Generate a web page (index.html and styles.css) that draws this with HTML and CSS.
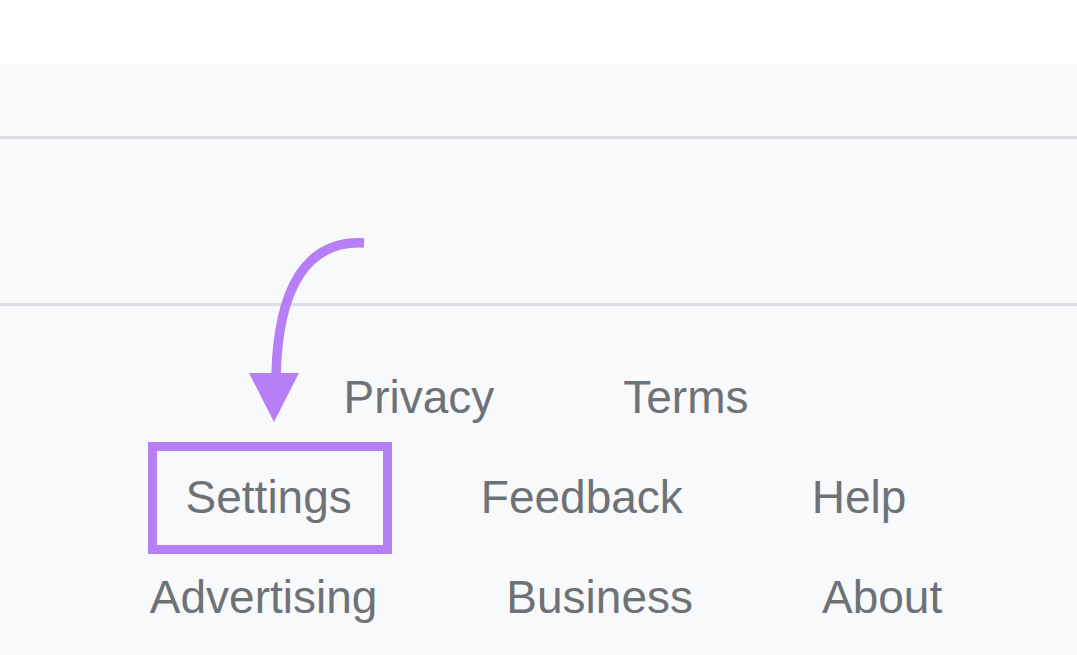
FILE: index.html
```html
<!DOCTYPE html>
<html lang="en">
<head>
<meta charset="utf-8">
<title>Footer settings</title>
<link rel="stylesheet" href="styles.css">
</head>
<body>
<div class="topbar"></div>
<main class="footer">
  <div class="band band-one"></div>
  <div class="band band-two"></div>
  <nav class="links">
    <div class="row">
      <a class="link" href="#">Privacy</a>
      <a class="link" href="#">Terms</a>
    </div>
    <div class="row">
      <a class="link link-highlight" href="#">Settings</a>
      <a class="link" href="#">Feedback</a>
      <a class="link" href="#">Help</a>
    </div>
    <div class="row">
      <a class="link" href="#">Advertising</a>
      <a class="link" href="#">Business</a>
      <a class="link" href="#">About</a>
    </div>
  </nav>
</main>
<svg class="annotation" width="1077" height="655" viewBox="0 0 1077 655" aria-hidden="true">
  <path d="M 364 243 C 305 240, 278 290, 276 376" fill="none" stroke="#b77ff6" stroke-width="9.5" stroke-linecap="butt"/>
  <polygon points="249,373 299,373 274,422" fill="#b77ff6"/>
</svg>
</body>
</html>
```

FILE: styles.css
```css
html, body {
  margin: 0;
  padding: 0;
}

body {
  background: #f8f9fa;
  font-family: "Liberation Sans", Arial, Helvetica, sans-serif;
  width: 1077px;
  height: 655px;
  overflow: hidden;
  position: relative;
}

.topbar {
  height: 64px;
  background: #ffffff;
}

.footer {
  background: #f8f9fa;
}

.band {
  border-bottom: 3px solid #dcdde0;
}

.band-one {
  height: 72px;
}

.band-two {
  height: 164px;
}

.links {
  padding: 41px 0 0 15px;
  display: flex;
  flex-direction: column;
}

.row {
  display: flex;
  justify-content: center;
  gap: 129px;
  height: 100px;
}

.link {
  font-size: 46px;
  line-height: 100px;
  color: #6e7277;
  text-decoration: none;
  white-space: nowrap;
  position: relative;
}

.link-highlight::after {
  content: "";
  position: absolute;
  left: -38px;
  top: -5px;
  width: 226px;
  height: 94px;
  border: 9px solid #b77ff6;
}

.annotation {
  position: absolute;
  left: 0;
  top: 0;
  pointer-events: none;
}
```
